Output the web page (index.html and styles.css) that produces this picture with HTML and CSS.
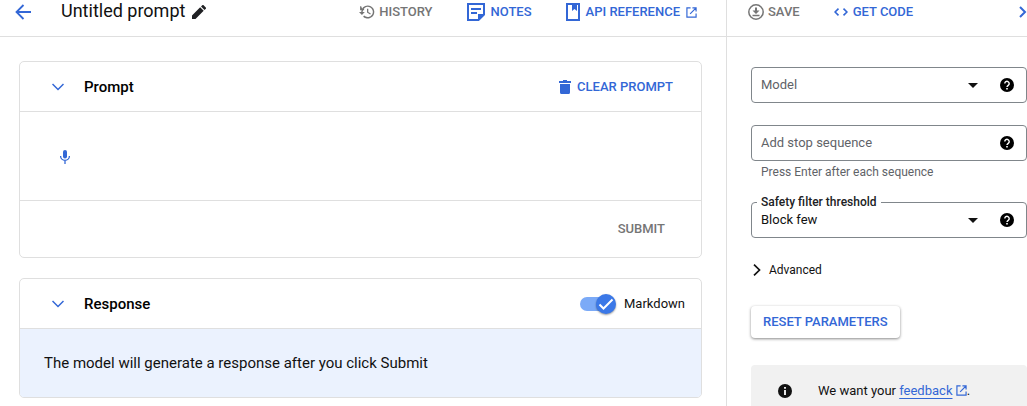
FILE: index.html
```html
<!DOCTYPE html>
<html lang="en">
<head>
<meta charset="utf-8">
<title>Untitled prompt</title>
<link rel="stylesheet" href="styles.css">
</head>
<body>
<div class="app">
  <main class="editor">
    <header class="bar editor-bar">
      <button class="icon-btn" aria-label="Back"><svg class="i-back" viewBox="0 0 16 16" fill="none" stroke="currentColor" stroke-width="1.800"><path d="M16 8H2M8.500 1 1.500 8l7 7"/></svg></button>
      <h1 class="title">Untitled prompt</h1>
      <button class="icon-btn dark" aria-label="Edit title"><svg class="i-edit" viewBox="3 3 18 18" fill="currentColor"><path d="M3 16.500V21h4.500L18 10.500 13.500 6zM20.710 7.800a1.200 1.200 0 0 0 0-1.700l-2.810-2.810a1.200 1.200 0 0 0-1.700 0L14.600 4.900l4.500 4.500z"/></svg></button>
      <nav class="actions">
        <button class="action" disabled><svg class="i16" viewBox="1 2 22 20" fill="currentColor"><path d="M13 3a9 9 0 0 0-9 9H1l4 4 4-4H6a7 7 0 1 1 2.060 4.940l-1.420 1.420A9 9 0 1 0 13 3zm-1 4.500v5.300l4.300 2.700 1-1.500-3.500-2.100V7.500z"/><path d="M2.500 4v5.500H8V8H5.500L4 4z"/></svg>History</button>
        <button class="action wide-gap"><svg class="i18" viewBox="0 0 18 18"><path d="M1 1h16v10.500L11.500 17H1z" fill="none" stroke="currentColor" stroke-width="2"/><path d="M4 5h10v2H4zM4 9h6v2H4zM11 18v-7h7z" fill="currentColor"/></svg>Notes</button>
        <a class="action wide-gap" href="#api"><svg class="i-book" viewBox="0 0 14 18"><path d="M1 1h12v16H1z" fill="none" stroke="currentColor" stroke-width="2"/><path d="M6 1h5v7L8.500 6 6 8z" fill="currentColor"/></svg>API reference<svg class="i-ext" viewBox="0 0 12 12" fill="none" stroke="currentColor" stroke-width="1.300"><path d="M5 1H1v10h10V7M7 1h4v4M11 1 4.500 7.500"/></svg></a>
      </nav>
    </header>

    <div class="cards">
      <section class="card">
        <div class="card-head">
          <button class="icon-btn" aria-label="Collapse prompt"><svg class="i-chev" viewBox="0 0 12 8" fill="none" stroke="currentColor" stroke-width="1.500"><path d="m.5 1 5.500 5.500L11.500 1"/></svg></button>
          <h2 class="card-title">Prompt</h2>
          <button class="action trailing clear"><svg class="i-trash" viewBox="0 0 12 14" fill="currentColor"><path d="M4 0h4v1h4v2H0V1h4zM1 4h10v8.500a1.500 1.500 0 0 1-1.500 1.500h-7A1.500 1.500 0 0 1 1 12.500z"/></svg>Clear prompt</button>
        </div>
        <div class="prompt-body">
          <button class="icon-btn" aria-label="Dictate"><svg class="i-mic" viewBox="0 0 10 14"><rect x="3" y="0" width="4" height="8.500" rx="2" fill="currentColor"/><path d="M.6 6a4.400 4.400 0 0 0 8.800 0M5 10.500V14" fill="none" stroke="currentColor" stroke-width="1.300"/></svg></button>
          <textarea class="prompt-input" aria-label="Prompt"></textarea>
        </div>
        <div class="card-foot"><button class="action" disabled>Submit</button></div>
      </section>

      <section class="card">
        <div class="card-head">
          <button class="icon-btn" aria-label="Collapse response"><svg class="i-chev" viewBox="0 0 12 8" fill="none" stroke="currentColor" stroke-width="1.500"><path d="m.5 1 5.500 5.500L11.500 1"/></svg></button>
          <h2 class="card-title">Response</h2>
          <label class="toggle trailing"><span class="switch"><input type="checkbox" checked><svg class="tick" viewBox="0 0 20 20" fill="none" stroke="currentColor" stroke-width="2"><path d="m3.500 10.500 4 4L16.500 5.500"/></svg></span>Markdown</label>
        </div>
        <p class="response-body">The model will generate a response after you click Submit</p>
      </section>
    </div>
  </main>

  <aside class="panel">
    <header class="bar panel-bar">
      <button class="action" disabled><svg class="i16" viewBox="0 0 16 16"><circle cx="8" cy="8" r="7.200" fill="none" stroke="currentColor" stroke-width="1.500"/><path d="M7 3.500h2v3h2.500L8 10 4.500 6.500H7zM4.500 10.800h7v1.400h-7z" fill="currentColor"/></svg>Save</button>
      <button class="action code"><svg class="i-code" viewBox="0 0 14 8" fill="none" stroke="currentColor" stroke-width="1.600"><path d="M4.500.6 1.100 4l3.400 3.400M9.500.6 12.900 4 9.500 7.400"/></svg>Get code</button>
      <button class="icon-btn trailing" aria-label="Collapse panel"><svg class="i-next" viewBox="0 0 8 12" fill="none" stroke="currentColor" stroke-width="2"><path d="m1 1 5 5-5 5"/></svg></button>
    </header>

    <form class="settings">
      <div class="field">
        <div class="select-wrap">
          <select class="control muted" aria-label="Model"><option>Model</option></select>
          <svg class="i-drop" viewBox="0 0 10 5" fill="currentColor"><path d="M0 0h10L5 5z"/></svg>
        </div>
        <button type="button" class="icon-btn help" aria-label="Model help"><svg class="i14" viewBox="0 0 14 14"><circle cx="7" cy="7" r="7" fill="currentColor"/><path d="M4.800 5.500a2.200 2.200 0 1 1 3.600 1.700C7.500 7.900 7 8.200 7 9.100" fill="none" stroke="#fff" stroke-width="1.400"/><path d="M6.200 10h1.600v1.500H6.200z" fill="#fff"/></svg></button>
      </div>

      <div class="stop">
        <div class="field">
          <input class="control" type="text" placeholder="Add stop sequence" aria-label="Stop sequence" aria-describedby="stop-hint">
          <button type="button" class="icon-btn help" aria-label="Stop sequence help"><svg class="i14" viewBox="0 0 14 14"><circle cx="7" cy="7" r="7" fill="currentColor"/><path d="M4.800 5.500a2.200 2.200 0 1 1 3.600 1.700C7.500 7.900 7 8.200 7 9.100" fill="none" stroke="#fff" stroke-width="1.400"/><path d="M6.200 10h1.600v1.500H6.200z" fill="#fff"/></svg></button>
        </div>
        <p class="hint" id="stop-hint">Press Enter after each sequence</p>
      </div>

      <div class="field">
        <label class="float-label" for="safety">Safety filter threshold</label>
        <div class="select-wrap">
          <select class="control" id="safety"><option>Block few</option></select>
          <svg class="i-drop" viewBox="0 0 10 5" fill="currentColor"><path d="M0 0h10L5 5z"/></svg>
        </div>
        <button type="button" class="icon-btn help" aria-label="Safety filter help"><svg class="i14" viewBox="0 0 14 14"><circle cx="7" cy="7" r="7" fill="currentColor"/><path d="M4.800 5.500a2.200 2.200 0 1 1 3.600 1.700C7.500 7.900 7 8.200 7 9.100" fill="none" stroke="#fff" stroke-width="1.400"/><path d="M6.200 10h1.600v1.500H6.200z" fill="#fff"/></svg></button>
      </div>

      <button type="button" class="advanced"><svg class="i-next" viewBox="0 0 8 12" fill="none" stroke="currentColor" stroke-width="1.700"><path d="m1 .6 5.500 5.400L1 11.400"/></svg>Advanced</button>
      <button type="reset" class="reset">Reset parameters</button>

      <div class="notice">
        <svg class="i14" viewBox="0 0 14 14"><circle cx="7" cy="7" r="7" fill="currentColor"/><path d="M6.100 3h1.800v1.700H6.100zM6.100 6h1.800v5H6.100z" fill="#fff"/></svg>
        <p class="notice-text">We want your <a class="link" href="#feedback">feedback</a> <svg class="i-ext blue" viewBox="0 0 12 12" fill="none" stroke="currentColor" stroke-width="1.300"><path d="M5 1H1v10h10V7M7 1h4v4M11 1 4.500 7.500"/></svg>.</p>
      </div>
    </form>
  </aside>
</div>
</body>
</html>
```
FILE: styles.css
```css
* { box-sizing: border-box; }

body {
  margin: 0;
  height: 100vh;
  overflow: hidden;
  background: #fff;
  color: #111;
  font: 14px/20px Roboto, sans-serif;
}

h1, h2, p { margin: 0; }

button, input, select, textarea {
  font: inherit;
  color: inherit;
}

button {
  padding: 0;
  border: 0;
  background: none;
  cursor: pointer;
}

svg { display: block; flex: none; }

.app {
  display: grid;
  grid-template-columns: minmax(0, 1fr) 301px;
  min-height: 100vh;
}

.bar {
  display: flex;
  align-items: center;
  padding-bottom: 12px;
  border-bottom: 1px solid #dfdfdf;
}

.bar > * { min-height: 24px; }

.icon-btn {
  display: flex;
  align-items: center;
  justify-content: center;
  color: #3367d6;
}

.dark { color: #202124; }

.trailing { margin-left: auto; }

.action {
  display: flex;
  align-items: center;
  gap: 4px;
  color: #3367d6;
  font-size: 13px;
  font-weight: 500;
  text-transform: uppercase;
  text-decoration: none;
  white-space: nowrap;
}

.action:disabled { color: #757575; cursor: default; }
.wide-gap { gap: 6px; }
.code { gap: 5px; }

.editor-bar { padding-left: 15px; padding-right: 29px; }

.title {
  margin: 0 7px 0 30px;
  font-size: 18px;
  font-weight: 400;
  line-height: 22px;
}

.actions {
  display: flex;
  gap: 34px;
  margin-left: auto;
}

.cards {
  display: grid;
  gap: 20px;
  padding: 24px 24px 8px 19px;
}

.card {
  border: 1px solid #dfdfdf;
  border-radius: 5px;
  overflow: hidden;
}

.card-head {
  display: flex;
  align-items: center;
  gap: 20px;
  height: 50px;
  padding: 0 16px 0 32px;
  border-bottom: 1px solid #dfdfdf;
}

.card-title {
  color: #000;
  font-size: 15px;
  font-weight: 500;
}

.clear { gap: 6px; margin-right: 12px; }

.prompt-body {
  display: flex;
  align-items: center;
  gap: 12px;
  padding: 21px 24px 19px 40px;
  border-bottom: 1px solid #dfdfdf;
}

.prompt-input {
  flex: 1;
  height: 48px;
  padding: 14px 0;
  border: 0;
  outline: 0;
  resize: none;
}

.card-foot {
  display: flex;
  justify-content: flex-end;
  padding: 18px 36px;
}

.toggle {
  display: flex;
  align-items: center;
  gap: 8px;
  font-size: 13px;
}

.switch { display: grid; align-items: center; width: 36px; }

.switch input {
  grid-area: 1 / 1;
  appearance: none;
  width: 34px;
  height: 14px;
  margin: 0;
  border-radius: 7px;
  background: #7baaf7;
}

.tick {
  grid-area: 1 / 1;
  justify-self: end;
  width: 20px;
  height: 20px;
  border-radius: 50%;
  background: #3b78e7;
  color: #fff;
  box-shadow: 0 1px 2px #0006;
  pointer-events: none;
}

.response-body {
  padding: 24px;
  background: #ebf2fe;
  font-size: 15px;
}

.panel { border-left: 1px solid #dfdfdf; }

.panel-bar { gap: 34px; padding-left: 21px; }

.settings {
  display: grid;
  justify-items: start;
  padding: 30px 0 0 24px;
}

.field {
  position: relative;
  display: flex;
  width: 100%;
  height: 36px;
  border: 1px solid #80868b;
  border-radius: 4px;
}

.select-wrap {
  display: grid;
  flex: 1;
  align-items: center;
}

.control {
  grid-area: 1 / 1;
  flex: 1;
  min-width: 0;
  height: 100%;
  padding: 0 9px;
  border: 0;
  outline: 0;
  appearance: none;
  background: transparent;
  font-size: 13px;
}

input.control { padding-bottom: 2px; }

.control::placeholder { color: #5f6368; opacity: 1; }
.muted { color: #5f6368; }

.i-drop {
  grid-area: 1 / 1;
  justify-self: end;
  width: 10px;
  height: 5px;
  margin-right: 10px;
  pointer-events: none;
}

.help { width: 38px; color: #000; }

.stop { width: 100%; padding: 22px 0; }

.hint {
  padding: 3px 10px 0;
  color: #5f6368;
  font-size: 12px;
  line-height: 16px;
}

.float-label {
  position: absolute;
  top: -9px;
  left: 5px;
  padding: 0 4px;
  background: #fff;
  color: #202124;
  font-size: 12px;
  font-weight: 500;
  line-height: 16px;
}

.advanced {
  display: flex;
  align-items: center;
  gap: 8px;
  margin: 22px 0 26px 2px;
  font-size: 12px;
}

.reset {
  height: 32px;
  padding: 0 12px;
  border-radius: 4px;
  background: #fff;
  color: #3367d6;
  font-size: 13px;
  font-weight: 500;
  text-transform: uppercase;
  box-shadow: 0 1px 3px #0007;
}

.notice {
  display: flex;
  align-items: center;
  gap: 26px;
  width: 100%;
  margin-top: 27px;
  padding: 16px 27px;
  border-radius: 4px 4px 0 0;
  background: #f1f1f1;
}

.notice-text { font-size: 13px; }
.link { color: #3367d6; text-decoration: underline; text-underline-offset: 3px; }
.blue { display: inline-block; color: #3367d6; vertical-align: -1px; }

.i-back, .i16 { width: 16px; height: 16px; }
.i-edit { width: 14px; height: 14px; }
.i18 { width: 18px; height: 18px; }
.i-book { width: 14px; height: 18px; }
.i-ext { width: 11px; height: 11px; }
.i-chev { width: 12px; height: 8px; }
.i-trash { width: 12px; height: 14px; }
.i-mic { width: 10px; height: 14px; }
.i-code { width: 14px; height: 8px; }
.i-next { width: 8px; height: 12px; }
.i14 { width: 14px; height: 14px; }
```
